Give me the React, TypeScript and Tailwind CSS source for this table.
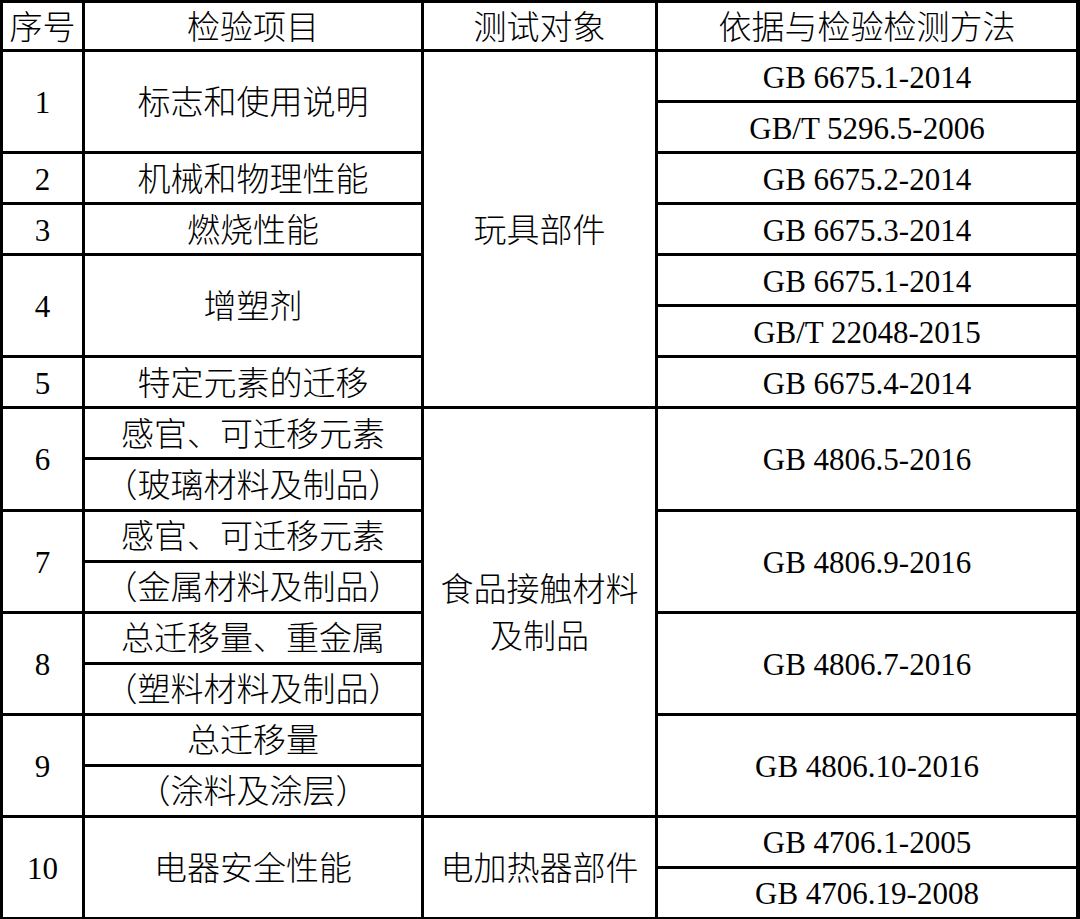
const cjk = "font-['Liberation_Serif','Noto_Sans_CJK_SC',serif] font-light text-[33px] pt-[4px]";
const latin = "font-['Liberation_Serif',serif] text-[31px] pt-[2px]";

type Cell = { text: React.ReactNode; col: number; row: number; span?: number; latin?: boolean };

const cells: Cell[] = [
  { text: '序号', col: 1, row: 1 },
  { text: '检验项目', col: 2, row: 1 },
  { text: '测试对象', col: 3, row: 1 },
  { text: '依据与检验检测方法', col: 4, row: 1 },

  { text: '1', col: 1, row: 2, span: 2, latin: true },
  { text: '2', col: 1, row: 4, latin: true },
  { text: '3', col: 1, row: 5, latin: true },
  { text: '4', col: 1, row: 6, span: 2, latin: true },
  { text: '5', col: 1, row: 8, latin: true },
  { text: '6', col: 1, row: 9, span: 2, latin: true },
  { text: '7', col: 1, row: 11, span: 2, latin: true },
  { text: '8', col: 1, row: 13, span: 2, latin: true },
  { text: '9', col: 1, row: 15, span: 2, latin: true },
  { text: '10', col: 1, row: 17, span: 2, latin: true },

  { text: '标志和使用说明', col: 2, row: 2, span: 2 },
  { text: '机械和物理性能', col: 2, row: 4 },
  { text: '燃烧性能', col: 2, row: 5 },
  { text: '增塑剂', col: 2, row: 6, span: 2 },
  { text: '特定元素的迁移', col: 2, row: 8 },
  { text: '感官、可迁移元素', col: 2, row: 9 },
  { text: '（玻璃材料及制品）', col: 2, row: 10 },
  { text: '感官、可迁移元素', col: 2, row: 11 },
  { text: '（金属材料及制品）', col: 2, row: 12 },
  { text: '总迁移量、重金属', col: 2, row: 13 },
  { text: '（塑料材料及制品）', col: 2, row: 14 },
  { text: '总迁移量', col: 2, row: 15 },
  { text: '（涂料及涂层）', col: 2, row: 16 },
  { text: '电器安全性能', col: 2, row: 17, span: 2 },

  { text: '玩具部件', col: 3, row: 2, span: 7 },
  {
    text: (
      <span className="flex flex-col items-center leading-[47px]">
        <span>食品接触材料</span>
        <span>及制品</span>
      </span>
    ),
    col: 3,
    row: 9,
    span: 8,
  },
  { text: '电加热器部件', col: 3, row: 17, span: 2 },

  { text: 'GB 6675.1-2014', col: 4, row: 2, latin: true },
  { text: 'GB/T 5296.5-2006', col: 4, row: 3, latin: true },
  { text: 'GB 6675.2-2014', col: 4, row: 4, latin: true },
  { text: 'GB 6675.3-2014', col: 4, row: 5, latin: true },
  { text: 'GB 6675.1-2014', col: 4, row: 6, latin: true },
  { text: 'GB/T 22048-2015', col: 4, row: 7, latin: true },
  { text: 'GB 6675.4-2014', col: 4, row: 8, latin: true },
  { text: 'GB 4806.5-2016', col: 4, row: 9, span: 2, latin: true },
  { text: 'GB 4806.9-2016', col: 4, row: 11, span: 2, latin: true },
  { text: 'GB 4806.7-2016', col: 4, row: 13, span: 2, latin: true },
  { text: 'GB 4806.10-2016', col: 4, row: 15, span: 2, latin: true },
  { text: 'GB 4706.1-2005', col: 4, row: 17, latin: true },
  { text: 'GB 4706.19-2008', col: 4, row: 18, latin: true },
];

function App() {
  return (
    <div className="w-[1080px] bg-white">
      <div className="grid h-[919px] w-[1080px] grid-cols-[79px_336px_231px_1fr] grid-rows-[46px_repeat(17,minmax(0,1fr))] gap-[3px] bg-black pt-[3px] pb-[2px] pl-[3px] pr-[4px] text-black">
        {cells.map((c, i) => (
          <div
            key={i}
            style={{ gridColumn: c.col, gridRow: `${c.row} / span ${c.span ?? 1}` }}
            className={`flex items-center justify-center whitespace-nowrap bg-white leading-none ${c.latin ? latin : cjk}`}
          >
            {c.text}
          </div>
        ))}
      </div>
    </div>
  );
}

export default App;
